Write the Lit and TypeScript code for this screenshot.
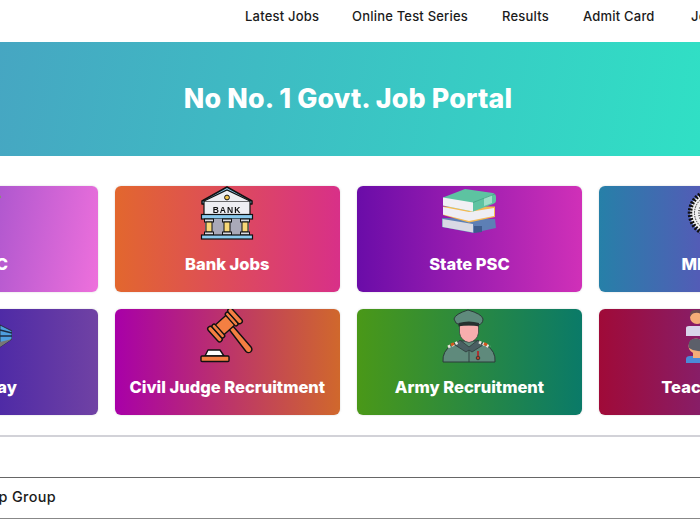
import { LitElement, html, css, svg } from "lit";
import { customElement } from "lit/decorators.js";

const bank = svg`
  <path d="M27 1 L52 15 L52 18 L2 18 L2 15 Z" fill="#8ccbee" stroke="#111" stroke-width="1.5" stroke-linejoin="round"/>
  <rect x="4" y="15" width="46" height="14" fill="#eeeef2" stroke="#111" stroke-width="1.2"/>
  <path d="M4 15 L27 4 L50 15" fill="#eeeef2" stroke="#111" stroke-width="1.2"/>
  <circle cx="27" cy="11.5" r="2.4" fill="#f4c64e" stroke="#111" stroke-width="1"/>
  <text x="27" y="27" text-anchor="middle" font-family="Liberation Sans, sans-serif" font-weight="700" font-size="8.5" letter-spacing="1" fill="#111">BANK</text>
  <rect x="1.5" y="28.5" width="51" height="4.5" fill="#8ccbee" stroke="#111" stroke-width="1.2"/>
  <rect x="5" y="33" width="44" height="16" fill="#a9a9b8"/>
  <g stroke="#111" stroke-width="1">
    <rect x="4.5" y="33" width="9" height="3" fill="#d8d8de"/><rect x="6" y="36" width="6" height="10" fill="#f7d777"/><rect x="4.5" y="46" width="9" height="3" fill="#d8d8de"/>
    <rect x="22.5" y="33" width="9" height="3" fill="#d8d8de"/><rect x="24" y="36" width="6" height="10" fill="#f7d777"/><rect x="22.5" y="46" width="9" height="3" fill="#d8d8de"/>
    <rect x="40.5" y="33" width="9" height="3" fill="#d8d8de"/><rect x="42" y="36" width="6" height="10" fill="#f7d777"/><rect x="40.5" y="46" width="9" height="3" fill="#d8d8de"/>
  </g>
  <rect x="1.5" y="49" width="51" height="4" fill="#8ccbee" stroke="#111" stroke-width="1.2"/>`;

const books = svg`
  <path d="M0 32 L0 41 L31 47 L54 42 L53 33 Z" fill="#5d7fb5"/>
  <path d="M0.5 33 L0.5 41 L31 46.5 L31 38 Z" fill="#d9d9e4"/>
  <path d="M32 40 h8 v6 l-8 1 Z" fill="#3d5b8d"/>
  <path d="M1 20.5 L1 29 L27 36.5 L53 31 L53 20.5 Z" fill="#f4b952"/>
  <path d="M1 21 L1 28.5 L27 35 L52 30 L52 22 L27 26 Z" fill="#efeef4"/>
  <path d="M1 11.5 L23 3 L51 7 Q54 8 54 11 L54 15 Q54 17 51 18 L31 25.5 L1 19.5 Z" fill="#5dc3a1"/>
  <path d="M1 11.5 L31 16.5 L31 25.5 L1 19.5 Z" fill="#f1f0f4"/>
  <path d="M42 12 L50 9 L50 17 L42 20 Z" fill="#9fe0c8"/>
  <path d="M31 16.5 L53 8" stroke="#3f9d80" stroke-width=".7" fill="none"/>`;

const gavel = svg`
  <g stroke="#111" stroke-width="1.4" stroke-linejoin="round">
    <path d="M28 19 L32 16 L51 38 Q53 41 50.5 43 Q48 44.5 46 42.5 Z" fill="#f47f42"/>
    <g transform="rotate(-42 25 16)">
      <rect x="11" y="9.5" width="28" height="13" fill="#f47f42"/>
      <rect x="9" y="6.5" width="5" height="19" rx="2.4" fill="#f47f42"/>
      <rect x="14" y="7.5" width="4" height="17" rx="2" fill="#f47f42"/>
      <rect x="32" y="7.5" width="4" height="17" rx="2" fill="#f47f42"/>
      <rect x="36" y="6.5" width="5" height="19" rx="2.4" fill="#f47f42"/>
    </g>
    <path d="M8 41 h12 l4 6 h-19 Z" fill="#fff"/>
    <rect x="1" y="47" width="28" height="5.5" rx="1" fill="#f47f42"/>
  </g>`;

const soldier = svg`
  <path d="M1 53 Q0 42 10 36 L18 32 L36 32 L44 36 Q54 42 53 53 Z" fill="#5f8a7c" stroke="#2d3b3a" stroke-width="1"/>
  <path d="M18 31 L27 38 L36 31 L41 36 L30 43 L27 41 L24 43 L13 36 Z" fill="#4a5f62" stroke="#2d3b3a" stroke-width=".8"/>
  <path d="M6 38 L17 33" stroke="#e9e4da" stroke-width="3" stroke-dasharray="2.5 1.5"/>
  <path d="M37 33 L48 38" stroke="#e9e4da" stroke-width="3" stroke-dasharray="2.5 1.5"/>
  <path d="M9 36 l3 -1.5 M42 34.5 l3 1.5" stroke="#d4561c" stroke-width="3"/>
  <path d="M27 41 V53" stroke="#2d3b3a" stroke-width=".9"/>
  <path d="M17.5 14 H36.5 V24 Q35 32 27 33.5 Q19 32 17.5 24 Z" fill="#f7aeae" stroke="#2d3b3a" stroke-width=".7"/>
  <path d="M12 10 Q13 5 26 1 Q40 5 41 10 Q41 15 36 16 H18 Q13 15 12 10 Z" fill="#5f8a7c" stroke="#2d3b3a" stroke-width="1"/>
  <path d="M16.5 14 Q27 11 37 14 L37 17.5 Q27 15 16.5 17.5 Z" fill="#26302f"/>
  <path d="M36 42 v5" stroke="#a33" stroke-width="2"/>
  <circle cx="36" cy="49" r="1.8" fill="#b5442a" stroke="#222" stroke-width=".7"/>`;

const seal = svg`
  <circle cx="27" cy="27" r="22" fill="#f1f1f1" stroke="#111" stroke-width="4.5" stroke-dasharray="2 1.4"/>
  <circle cx="27" cy="27" r="17.5" fill="none" stroke="#333" stroke-width="1" stroke-dasharray="1.5 1"/>
  <circle cx="27" cy="27" r="13" fill="none" stroke="#555" stroke-width="2" stroke-dasharray="1 1.5"/>
  <circle cx="27" cy="27" r="7" fill="#777"/>`;

const teachers = svg`
  <path d="M1 19 Q1 17 4 17 L18 17 Q24 17 24 19 V27 H1 Z" fill="#d9d5ea"/>
  <circle cx="12" cy="8" r="7" fill="#f4ad78"/>
  <path d="M5 8 Q4 0 12 1 Q20 0 19 7 Q14 3 10 4 Q7 4 5 8 Z" fill="#6a4a4e"/>
  <path d="M1 54 V50 Q1 47 5 47 H20 Q24 47 24 50 V54 Z" fill="#4b8ad8"/>
  <rect x="8" y="43" width="8" height="6" fill="#f4ad78"/>
  <circle cx="11" cy="37" r="7.5" fill="#f4ad78"/>
  <path d="M4 39 Q2 30 11 29.5 Q19 30 18 38 Q17 43 13 42 Q8 42 4 39 Z" fill="#5c5f6a"/>`;

const train = svg`
  <path d="M42 16 L54 22 L54 30 L42 38 Z" fill="#4f9fe0" stroke="#222" stroke-width=".8"/>
  <path d="M42 21 L54 24 M42 27 L54 27" stroke="#1d2b44" stroke-width="1.6"/>
  <path d="M42 33 L54 30 L42 38 Z" fill="#777"/>`;

const upsc = svg`<circle cx="41.5" cy="11" r="1.4" fill="#7a9a60"/><circle cx="41" cy="43" r="1" fill="#885a9c"/>`;

const top = ["UPSC", "Bank Jobs", "State PSC", "MPPSC"];
const bottom = ["Railway", "Civil Judge Recruitment", "Army Recruitment", "Teacher Job"];
const icons = [upsc, bank, books, seal, train, gavel, soldier, teachers];
const nav = ["Latest Jobs", "Online Test Series", "Results", "Admit Card", "Jobs"];

@customElement("app-root")
export class AppRoot extends LitElement {
  static styles = css`
    :host {
      display: block;
      width: 700px;
      height: 525px;
      overflow: hidden;
      background: #fff;
      font-family: Inter, "Liberation Sans", sans-serif;
      color: #1b1b1b;
    }
    .nav {
      display: grid;
      grid-template-columns: 107px 150px 81px 108px 60px;
      height: 32px;
      align-items: center;
      padding: 0 0 10px 245px;
      font-size: 13px;
      font-weight: 500;
      letter-spacing: 0.2px;
      white-space: nowrap;
      overflow: hidden;
    }
    .band {
      height: 114px;
      display: flex;
      align-items: center;
      justify-content: center;
      box-sizing: border-box;
      padding: 0 4px 2px 0;
      background: linear-gradient(100deg, #46a6c2 0%, #30e0c5 100%);
      color: #fff;
      font-size: 26.8px;
      font-weight: 800;
      letter-spacing: 0.16px;
    }
    .grid {
      display: grid;
      grid-template-columns: repeat(4, 225px);
      grid-auto-rows: 106px;
      column-gap: 17.2px;
      row-gap: 17px;
      margin: 30px 0 0 -127.4px;
    }
    .card {
      display: flex;
      flex-direction: column;
      align-items: center;
      border-radius: 6px;
      box-shadow: 0 0 2px rgba(120, 120, 120, 0.35);
      color: #fff;
      font-size: 16.5px;
      font-weight: 800;
      white-space: nowrap;
    }
    .card svg {
      width: 54px;
      height: 54px;
      flex: none;
      filter: blur(0.3px);
    }
    .card span {
      margin-top: 14px;
      line-height: 20px;
    }
    .g0 { background: linear-gradient(100deg, #6c3dc0, #ee70dc); }
    .g1 { background: linear-gradient(90deg, #e2672e, #d83088); }
    .g2 { background: linear-gradient(90deg, #6a0ca8, #d030b8); }
    .g3 { background: linear-gradient(90deg, #2680a8, #8a30c8); }
    .g4 { background: linear-gradient(90deg, #240ca8, #7042a4); }
    .g5 { background: linear-gradient(90deg, #a800a8, #d0682c); }
    .g6 { background: linear-gradient(90deg, #4a9818, #0a7a68); }
    .g7 { background: linear-gradient(90deg, #a00a38, #6a35a0); }
    .rule {
      margin-top: 20px;
      height: 2px;
      background: #d2d2d8;
    }
    .gap {
      height: 40px;
    }
    .group {
      display: flex;
      justify-content: flex-end;
      width: 56px;
      height: 37px;
      padding-bottom: 3px;
      align-items: center;
      font-size: 14.4px;
      font-weight: 500;
      letter-spacing: 0.35px;
      white-space: nowrap;
      flex: none;
    }
    .row {
      display: flex;
      overflow: hidden;
      border-top: 1px solid #666;
      border-bottom: 1px solid #888;
    }
  `;

  render() {
    const labels = [...top, ...bottom];
    return html`
      <div class="nav">${nav.map((n) => html`<span>${n}</span>`)}</div>
      <div class="band">No No. 1 Govt. Job Portal</div>
      <div class="grid">
        ${labels.map(
          (l, i) => html`<div class="card g${i}">
            <svg viewBox="0 0 54 54" aria-hidden="true">${icons[i]}</svg>
            <span>${l}</span>
          </div>`
        )}
      </div>
      <div class="rule"></div>
      <div class="gap"></div>
      <div class="row"><div class="group">WhatsApp Group</div></div>
    `;
  }
}
